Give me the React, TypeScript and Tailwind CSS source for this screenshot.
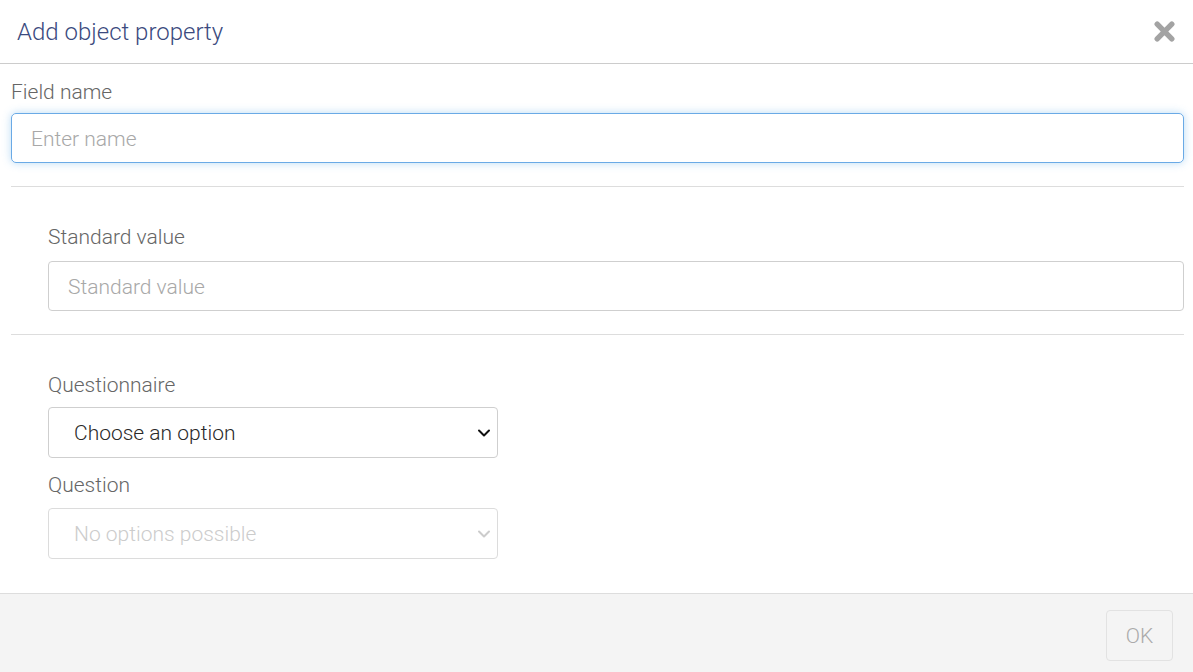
import React from 'react';

function CloseIcon() {
  return (
    <svg width="25" height="25" viewBox="0 0 24 24" fill="none">
      <path d="M5 5 L19 19 M19 5 L5 19" stroke="#a3a3a3" strokeWidth="5.2" strokeLinecap="round" />
    </svg>
  );
}

function Chevron({ color }: { color: string }) {
  return (
    <svg width="14" height="10" viewBox="0 0 14 10" fill="none">
      <path d="M2 2.5 L7 7.5 L12 2.5" stroke={color} strokeWidth="2" strokeLinecap="round" strokeLinejoin="round" />
    </svg>
  );
}

function FakeSelect({ text, disabled }: { text: string; disabled?: boolean }) {
  return (
    <div
      className={`relative flex h-[51px] w-[450px] items-center rounded-[4px] border pl-[25px] pt-[2px] text-[21px] ${
        disabled ? 'border-[#dcdcdc] text-[#cccccc]' : 'border-[#cfcfcf] text-[#2a2a2a]'
      }`}
    >
      {text}
      <div className="absolute right-[6px] top-1/2 -translate-y-1/2">
        <Chevron color={disabled ? '#cccccc' : '#111111'} />
      </div>
    </div>
  );
}

export default function App() {
  return (
    <div className="flex h-[672px] w-[1193px] flex-col bg-white font-['Roboto_Light','Roboto',sans-serif] font-light">
      {/* Header */}
      <div className="flex h-[64px] items-center justify-between border-b border-[#cccccc] pl-[17px] pr-[16px]">
        <h1 className="text-[24px] font-light text-[#3b4a7e]">Add object property</h1>
        <CloseIcon />
      </div>

      {/* Body */}
      <div className="flex-1 pl-[11px] pr-[9px] pt-[15px]">
        <label className="block text-[21px] leading-[26px] text-[#666666]">Field name</label>
        <input
          className="mt-[8px] block h-[50px] w-full rounded-[5px] border border-[#6aaae6] px-[19px] pt-[2px] text-[21px] font-light shadow-[0_0_8px_rgba(102,175,233,0.45)] outline-none placeholder:text-[#a8a8a8]"
          placeholder="Enter name"
        />
        <div className="mt-[23px] border-t border-[#dddddd]" />

        <div className="pl-[37px]">
          <label className="mt-[37px] block text-[21px] leading-[26px] text-[#666666]">Standard value</label>
          <input
            className="mt-[11px] block h-[50px] w-full rounded-[4px] border border-[#cfcfcf] px-[19px] pt-[2px] text-[21px] font-light outline-none placeholder:text-[#a8a8a8]"
            placeholder="Standard value"
          />
        </div>
        <div className="mt-[23px] border-t border-[#dddddd]" />

        <div className="pl-[37px]">
          <label className="mt-[37px] block text-[21px] leading-[26px] text-[#666666]">Questionnaire</label>
          <div className="mt-[9px]">
            <FakeSelect text="Choose an option" />
          </div>
          <label className="mt-[14px] block text-[21px] leading-[26px] text-[#666666]">Question</label>
          <div className="mt-[10px]">
            <FakeSelect text="No options possible" disabled />
          </div>
        </div>
      </div>

      {/* Footer */}
      <div className="flex h-[79px] items-start justify-end border-t border-[#dddddd] bg-[#f4f4f4] pr-[20px] pt-[16px]">
        <button className="h-[51px] w-[67px] rounded-[4px] border border-[#e2e2e2] pt-[2px] text-[21px] font-light text-[#aaaaaa]">
          OK
        </button>
      </div>
    </div>
  );
}
